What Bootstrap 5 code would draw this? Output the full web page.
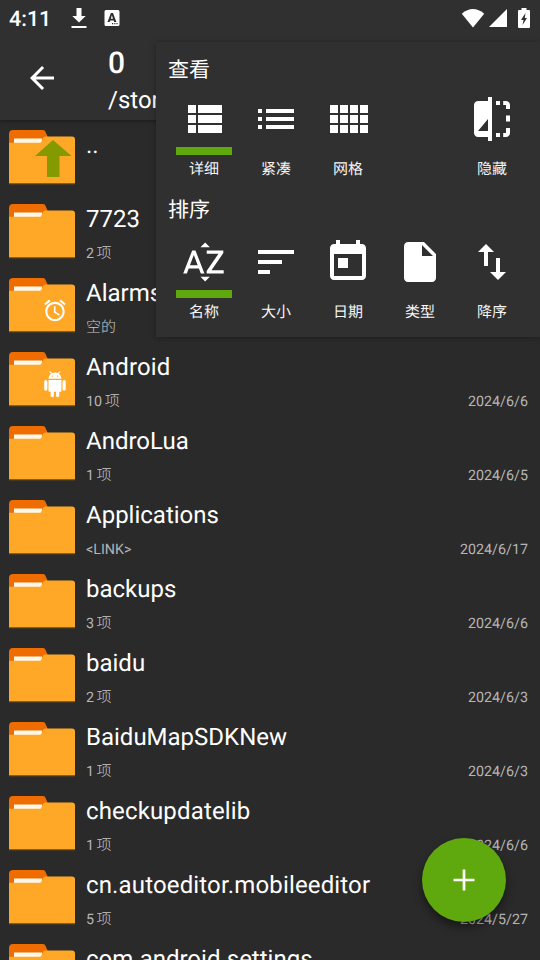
<!DOCTYPE html>
<html lang="zh-CN">
<head>
<meta charset="utf-8">
<meta name="viewport" content="width=device-width, initial-scale=1">
<title>/storage</title>
<link href="https://cdn.jsdelivr.net/npm/bootstrap@5.3.0/dist/css/bootstrap.min.css" rel="stylesheet">
<style>
body{background:#2a2a2a;color:#fff;font-family:Roboto,"Noto Sans CJK SC",sans-serif;height:960px;width:540px;text-rendering:geometricPrecision}
svg{display:block;fill:#fff;flex:none}
.topbar{background:#303030;height:120px;box-shadow:0 1px 4px rgba(0,0,0,.4);z-index:1}
.statusbar{height:36px;padding:0 10px 0 9px}
.clock{font-size:21.5px;font-weight:500;line-height:36px;padding-top:3px;width:61px}
.charge{margin-left:11px}
.titlebar{height:84px;padding-left:24px}
.path-title{font-size:30px;font-weight:500;line-height:36px;margin-top:10px}
.path-sub{font-size:24px;line-height:28px;margin-top:4px}
.titles{margin-left:48px}
.entry{height:74px;padding:0 12px 0 9px}
.folder{margin-top:8px}
.info{margin-left:11px;padding-top:10px}
.fname{font-size:24px;line-height:30px;white-space:nowrap}
.fname.wide{letter-spacing:.15px}
.meta{font-size:14.3px;line-height:20px;color:#b5b5b5;margin-top:10px}
.cnt{word-spacing:-1px;font-family:Roboto,"Noto Sans CJK SC Light","Noto Sans CJK SC",sans-serif}
.cnt b{font-weight:300;font-size:15px;line-height:1;color:#c8c8c8}
.panel{left:156px;top:42px;width:384px;height:295px;background:#303030;padding:0 12px;z-index:3;box-shadow:0 1px 6px rgba(0,0,0,.3)}
.sect{font-size:21px;line-height:30px}
.sect-a{padding-top:14px;height:53px}
.sect-b{padding-top:10px;height:52px}
.opts{grid-template-columns:repeat(5,72px)}
.opts-a{height:91px}
.strip{width:56px;height:8px;margin-top:4px}
.strip.on{background:#5fa80e}
.cap{font-size:15px;line-height:22px;margin-top:3px;color:#f4f4f4}
.fab{left:422px;top:838px;width:84px;height:84px;background:#5fa80e;z-index:4;box-shadow:0 5px 10px rgba(0,0,0,.45)}
.fab:hover{background:#5fa80e}
</style>
<script src="https://cdn.jsdelivr.net/npm/bootstrap@5.3.0/dist/js/bootstrap.bundle.min.js"></script>
</head>
<body class="position-relative overflow-hidden d-flex flex-column">
<svg width="0" height="0" class="position-absolute" aria-hidden="true">
  <defs>
    <g id="folder">
      <path fill="#ef6c00" d="M0 14V4q0-4 4-4h30q2 0 2.600 2l3 7v5z"/>
      <path fill="#fff8ec" d="M5 8.500h28v5H5z"/>
      <path fill="#ffa726" d="M0 12.800h31q1 0 1.600-1.500l1.400-3.300q.7-1.500 2.500-1.500H63q3 0 3 3V53.500H0z"/>
      <path fill="#8d5c17" d="M0 53h66v1.300H0z"/>
    </g>
  </defs>
</svg>

<header class="topbar position-relative flex-shrink-0">
  <div class="statusbar d-flex align-items-center">
    <span class="clock">4:11</span>
    <svg width="18" height="22" viewBox="0 0 18 22"><path d="M6.500 1h5v8h4.200L9 15.500 2.300 9h4.200zM1.500 19h15v2h-15z"/></svg>
    <svg class="ms-3" width="16" height="18" viewBox="0 0 16 18"><path fill-rule="evenodd" d="M2 1h12q1.500 0 1.500 1.500v13Q15.500 17 14 17H2Q.5 17 .5 15.500v-13Q.5 1 2 1zm4.900 3L3.500 13h2.200l.5-1.600h3.500l.5 1.600h2.200L9 4zm1 2.300 1.100 3.500H6.800zM8 14v1.200h1.200V14zm2.200 0v1.200h1.200V14zm2.200 0v1.200h1.200V14z"/></svg>
    <svg class="ms-auto" width="24" height="20" viewBox="0 0 24 20"><path d="M.8 5.700Q12-3.500 23.200 5.700L12 19.400z"/></svg>
    <svg class="ms-1" width="18" height="18" viewBox="0 0 18 18"><path d="M18 0v18H0z"/></svg>
    <svg class="charge" width="12" height="20" viewBox="0 0 12 20"><path fill-rule="evenodd" d="M3.500 0h5v2H11q1 0 1 1v16q0 1-1 1H1q-1 0-1-1V3q0-1 1-1h2.500zM7.500 5l-4.500 7h2.500l-1 5L9 10H6.800z"/></svg>
  </div>
  <div class="titlebar d-flex">
    <svg class="mt-4" width="36" height="36" viewBox="0 0 24 24"><path d="M20 11H7.830l5.590-5.590L12 4l-8 8 8 8 1.410-1.410L7.830 13H20v-2z"/></svg>
    <div class="titles">
      <div class="path-title">0</div>
      <div class="path-sub">/storage</div>
    </div>
  </div>
</header>

<main class="flex-grow-1 overflow-hidden">
  <div class="entry d-flex">
    <svg class="folder" width="66" height="58" viewBox="0 -2 66 58"><use href="#folder"/><path fill="#859900" d="M44 10 62.500 26H50.500V47H38V26H26z"/></svg>
    <div class="info"><div class="fname">..</div></div>
  </div>
  <div class="entry d-flex">
    <svg class="folder" width="66" height="58" viewBox="0 -2 66 58"><use href="#folder"/></svg>
    <div class="info"><div class="fname">7723</div><div class="meta"><span class="cnt">2 <b>项</b></span></div></div>
  </div>
  <div class="entry d-flex">
    <svg class="folder" width="66" height="58" viewBox="0 -2 66 58"><use href="#folder"/><path transform="translate(33 19.500) scale(1.08)" d="M22 5.720l-4.600-3.860-1.290 1.530 4.600 3.860L22 5.720zM7.880 3.390L6.600 1.860 2 5.710l1.290 1.530 4.590-3.850zM12.500 8H11v6l4.750 2.850.75-1.230-4-2.370V8zM12 4c-4.970 0-9 4.030-9 9s4.020 9 9 9c4.970 0 9-4.030 9-9s-4.030-9-9-9zm0 16c-3.870 0-7-3.130-7-7s3.130-7 7-7 7 3.130 7 7-3.130 7-7 7z"/></svg>
    <div class="info"><div class="fname">Alarms</div><div class="meta"><span class="cnt"><b>空的</b></span></div></div>
  </div>
  <div class="entry d-flex">
    <svg class="folder" width="66" height="58" viewBox="0 -2 66 58"><use href="#folder"/><path transform="translate(33 19.300) scale(1.08)" d="M6 18c0 .55.45 1 1 1h1v3.500c0 .83.67 1.500 1.500 1.500s1.500-.67 1.500-1.500V19h2v3.500c0 .83.67 1.500 1.500 1.500s1.500-.67 1.500-1.500V19h1c.55 0 1-.45 1-1V8H6v10zM3.500 8C2.670 8 2 8.670 2 9.500v7c0 .83.67 1.500 1.500 1.500S5 17.330 5 16.500v-7C5 8.670 4.330 8 3.500 8zm17 0c-.83 0-1.500.67-1.500 1.500v7c0 .83.67 1.500 1.500 1.500s1.500-.67 1.500-1.500v-7c0-.83-.67-1.500-1.500-1.500zm-4.970-5.840l1.300-1.300c.2-.2.2-.51 0-.71-.2-.2-.51-.2-.71 0l-1.480 1.480C13.850 1.230 12.950 1 12 1c-.96 0-1.860.23-2.660.63L7.850.15c-.2-.2-.51-.2-.71 0-.2.2-.2.51 0 .71l1.310 1.310C6.970 3.260 6 5.010 6 7h12c0-1.990-.97-3.750-2.470-4.840zM10 5H9V4h1v1zm5 0h-1V4h1v1z"/></svg>
    <div class="info flex-grow-1"><div class="fname wide">Android</div><div class="meta d-flex justify-content-between"><span class="cnt">10 <b>项</b></span><span>2024/6/6</span></div></div>
  </div>
  <div class="entry d-flex">
    <svg class="folder" width="66" height="58" viewBox="0 -2 66 58"><use href="#folder"/></svg>
    <div class="info flex-grow-1"><div class="fname">AndroLua</div><div class="meta d-flex justify-content-between"><span class="cnt">1 <b>项</b></span><span>2024/6/5</span></div></div>
  </div>
  <div class="entry d-flex">
    <svg class="folder" width="66" height="58" viewBox="0 -2 66 58"><use href="#folder"/></svg>
    <div class="info flex-grow-1"><div class="fname">Applications</div><div class="meta d-flex justify-content-between"><span class="cnt">&lt;LINK&gt;</span><span>2024/6/17</span></div></div>
  </div>
  <div class="entry d-flex">
    <svg class="folder" width="66" height="58" viewBox="0 -2 66 58"><use href="#folder"/></svg>
    <div class="info flex-grow-1"><div class="fname">backups</div><div class="meta d-flex justify-content-between"><span class="cnt">3 <b>项</b></span><span>2024/6/6</span></div></div>
  </div>
  <div class="entry d-flex">
    <svg class="folder" width="66" height="58" viewBox="0 -2 66 58"><use href="#folder"/></svg>
    <div class="info flex-grow-1"><div class="fname">baidu</div><div class="meta d-flex justify-content-between"><span class="cnt">2 <b>项</b></span><span>2024/6/3</span></div></div>
  </div>
  <div class="entry d-flex">
    <svg class="folder" width="66" height="58" viewBox="0 -2 66 58"><use href="#folder"/></svg>
    <div class="info flex-grow-1"><div class="fname">BaiduMapSDKNew</div><div class="meta d-flex justify-content-between"><span class="cnt">1 <b>项</b></span><span>2024/6/3</span></div></div>
  </div>
  <div class="entry d-flex">
    <svg class="folder" width="66" height="58" viewBox="0 -2 66 58"><use href="#folder"/></svg>
    <div class="info flex-grow-1"><div class="fname wide">checkupdatelib</div><div class="meta d-flex justify-content-between"><span class="cnt">1 <b>项</b></span><span>2024/6/6</span></div></div>
  </div>
  <div class="entry d-flex">
    <svg class="folder" width="66" height="58" viewBox="0 -2 66 58"><use href="#folder"/></svg>
    <div class="info flex-grow-1"><div class="fname wide">cn.autoeditor.mobileeditor</div><div class="meta d-flex justify-content-between"><span class="cnt">5 <b>项</b></span><span>2024/5/27</span></div></div>
  </div>
  <div class="entry d-flex">
    <svg class="folder" width="66" height="58" viewBox="0 -2 66 58"><use href="#folder"/></svg>
    <div class="info"><div class="fname">com.android.settings</div></div>
  </div>
</main>

<div class="panel position-absolute">
  <div class="sect sect-a">查看</div>
  <div class="opts opts-a d-grid">
    <div class="d-flex flex-column align-items-center">
      <svg width="48" height="48" viewBox="0 0 24 24"><path d="M4 14h4v-4H4v4zm0 5h4v-4H4v4zM4 9h4V5H4v4zm5 5h12v-4H9v4zm0 5h12v-4H9v4zM9 5v4h12V5H9z"/></svg>
      <div class="strip on"></div><div class="cap">详细</div>
    </div>
    <div class="d-flex flex-column align-items-center">
      <svg width="48" height="48" viewBox="0 0 24 24"><path d="M3 13h2v-2H3v2zm0 4h2v-2H3v2zm0-8h2V7H3v2zm4 4h14v-2H7v2zm0 4h14v-2H7v2zM7 7v2h14V7H7z"/></svg>
      <div class="strip"></div><div class="cap">紧凑</div>
    </div>
    <div class="d-flex flex-column align-items-center">
      <svg width="48" height="48" viewBox="0 0 24 24"><path d="M3 9h4V5H3v4zm0 5h4v-4H3v4zm5 0h4v-4H8v4zm5 0h4v-4h-4v4zM8 9h4V5H8v4zm5-4v4h4V5h-4zm5 9h4v-4h-4v4zM3 19h4v-4H3v4zm5 0h4v-4H8v4zm5 0h4v-4h-4v4zm5 0h4v-4h-4v4zm0-14v4h4V5h-4z"/></svg>
      <div class="strip"></div><div class="cap">网格</div>
    </div>
    <div></div>
    <div class="d-flex flex-column align-items-center">
      <svg width="48" height="48" viewBox="0 0 24 24"><path d="M10 3H5c-1.100 0-2 .9-2 2v14c0 1.100.9 2 2 2h5v2h2V1h-2v2zm0 15H5l5-6v6zM14 3h2v2h-2zM14 19h2v2h-2zM17.600 3H19c1.100 0 2 .9 2 2v2h-2V5h-1.400zM19 10.200h2v3.100h-2zM19 16.500h2V19c0 1.100-.9 2-2 2h-1.400v-2H19z"/></svg>
      <div class="strip"></div><div class="cap">隐藏</div>
    </div>
  </div>
  <div class="sect sect-b">排序</div>
  <div class="opts d-grid">
    <div class="d-flex flex-column align-items-center">
      <svg width="48" height="48" viewBox="0 0 24 24"><path d="M14.940 4.660h-4.720l2.360-2.360zm-4.690 14.710h4.660l-2.330 2.330zM6.100 6.270L1.600 17.730h1.840l.92-2.450h5.110l.92 2.450h1.840L7.740 6.270H6.100zm-1.130 7.370l1.940-5.180 1.940 5.180H4.970zm10.760 2.500h6.120v1.590h-8.530v-1.290l5.920-8.560h-5.880v-1.600h8.300v1.260l-5.930 8.600z"/></svg>
      <div class="strip on"></div><div class="cap">名称</div>
    </div>
    <div class="d-flex flex-column align-items-center">
      <svg width="48" height="48" viewBox="0 0 24 24"><path d="M3 18h6v-2H3v2zM3 6v2h18V6H3zm0 7h12v-2H3v2z"/></svg>
      <div class="strip"></div><div class="cap">大小</div>
    </div>
    <div class="d-flex flex-column align-items-center">
      <svg width="48" height="48" viewBox="0 0 24 24"><path d="M19 3h-1V1h-2v2H8V1H6v2H5c-1.110 0-1.990.9-1.990 2L3 19c0 1.100.89 2 2 2h14c1.100 0 2-.9 2-2V5c0-1.100-.9-2-2-2zm0 16H5V8h14v11zM7 10h5v5H7z"/></svg>
      <div class="strip"></div><div class="cap">日期</div>
    </div>
    <div class="d-flex flex-column align-items-center">
      <svg width="48" height="48" viewBox="0 0 24 24"><path d="M6 2c-1.100 0-1.990.9-1.990 2L4 20c0 1.100.89 2 1.990 2H18c1.100 0 2-.9 2-2V8l-6-6H6zm7 7V3.500L18.500 9H13z"/></svg>
      <div class="strip"></div><div class="cap">类型</div>
    </div>
    <div class="d-flex flex-column align-items-center">
      <svg width="48" height="48" viewBox="0 0 24 24"><path d="M16 17.010V10h-2v7.010h-3L15 21l4-3.990h-3zM9 3L5 6.990h3V14h2V6.990h3L9 3z"/></svg>
      <div class="strip"></div><div class="cap">降序</div>
    </div>
  </div>
</div>

<button type="button" class="btn fab position-absolute rounded-circle border-0 p-0 d-flex align-items-center justify-content-center" aria-label="新建">
  <svg width="36" height="36" viewBox="0 0 24 24"><path d="M19 12.900h-6.100V19h-1.800v-6.100H5v-1.800h6.100V5h1.800v6.100H19z"/></svg>
</button>
</body>
</html>
